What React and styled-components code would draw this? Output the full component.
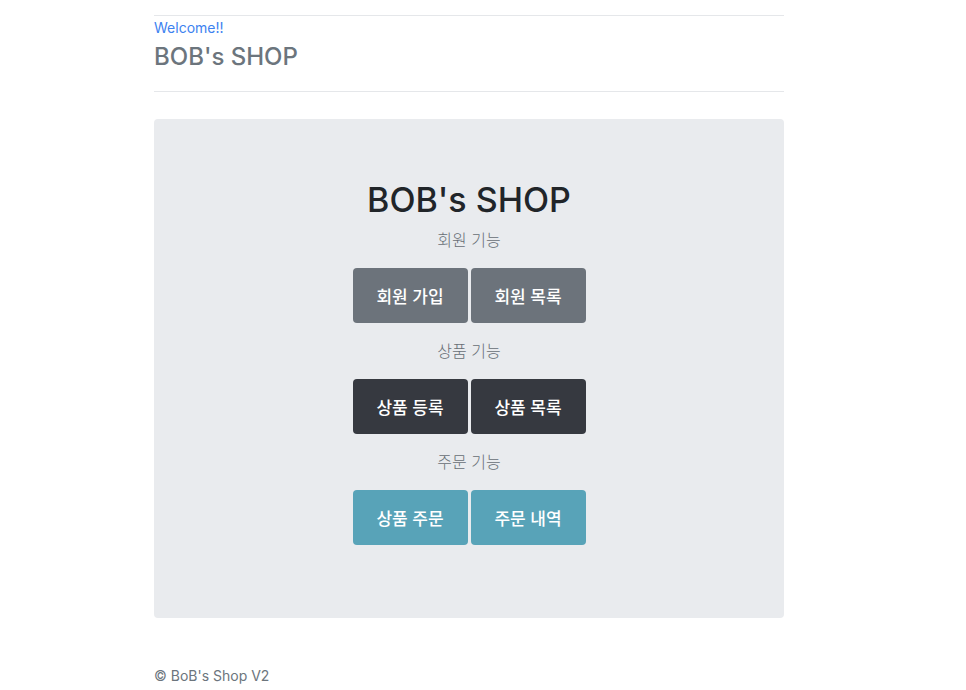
import React from 'react';
import styled, {createGlobalStyle} from 'styled-components';

const GlobalStyle = createGlobalStyle`
  body {
    margin: 0;
    background: #fff;
    font-family: Inter, "Noto Sans CJK KR", sans-serif;
  }
`;

const Page = styled.div`
  width: 630px;
  margin-left: 154px;
`;

const Header = styled.header`
  margin-top: 15px;
  border-top: 1px solid #e5e7ea;
  border-bottom: 1px solid #e5e7ea;
  padding: 3px 0 19px;
`;

const Welcome = styled.div`
  color: #3d82f0;
  font-size: 14px;
  line-height: 18px;
`;

const HeaderTitle = styled.h2`
  margin: 5px 0 0;
  color: #6c757d;
  font-size: 24px;
  font-weight: 500;
  line-height: 30px;
`;

const Jumbotron = styled.main`
  margin-top: 27px;
  height: 499px;
  box-sizing: border-box;
  background: #e9ebee;
  border-radius: 4px;
  padding-top: 57px;
  display: flex;
  flex-direction: column;
  align-items: center;
`;

const Title = styled.h1`
  margin: 0;
  color: #212529;
  font-size: 34px;
  font-weight: 500;
  line-height: 48px;
`;

const Section = styled.section`
  display: flex;
  flex-direction: column;
  align-items: center;

  & + & {
    margin-top: 12px;
  }
`;

const Label = styled.p`
  margin: 4px 0 16px;
  color: #676e75;
  font-size: 16px;
  line-height: 24px;
  font-weight: 300;
`;

const ButtonRow = styled.div`
  display: flex;
  gap: 3px;
`;

const colors = {
  secondary: '#6c737b',
  dark: '#363940',
  info: '#58a3b8',
};

const Button = styled.button`
  width: 115px;
  height: 55px;
  border: none;
  border-radius: 4px;
  background: ${p => colors[p.$variant]};
  color: #fff;
  font-family: Inter, "Noto Sans CJK KR", sans-serif;
  font-size: 17px;
  font-weight: 500;
  cursor: pointer;
`;

const Footer = styled.footer`
  margin-top: 49px;
  color: #6c757d;
  font-size: 14px;
  line-height: 18px;
`;

const sections = [
  {label: '회원 기능', variant: 'secondary', buttons: ['회원 가입', '회원 목록']},
  {label: '상품 기능', variant: 'dark', buttons: ['상품 등록', '상품 목록']},
  {label: '주문 기능', variant: 'info', buttons: ['상품 주문', '주문 내역']},
];

export default function App() {
  return (<>
    <GlobalStyle/>
    <Page>
      <Header>
        <Welcome>Welcome!!</Welcome>
        <HeaderTitle>BOB's SHOP</HeaderTitle>
      </Header>
      <Jumbotron>
        <Title>BOB's SHOP</Title>
        {sections.map(s => (
          <Section key={s.label}>
            <Label>{s.label}</Label>
            <ButtonRow>
              {s.buttons.map(b => <Button key={b} $variant={s.variant}>{b}</Button>)}
            </ButtonRow>
          </Section>
        ))}
      </Jumbotron>
      <Footer>© BoB's Shop V2</Footer>
    </Page>
  </>);
}
